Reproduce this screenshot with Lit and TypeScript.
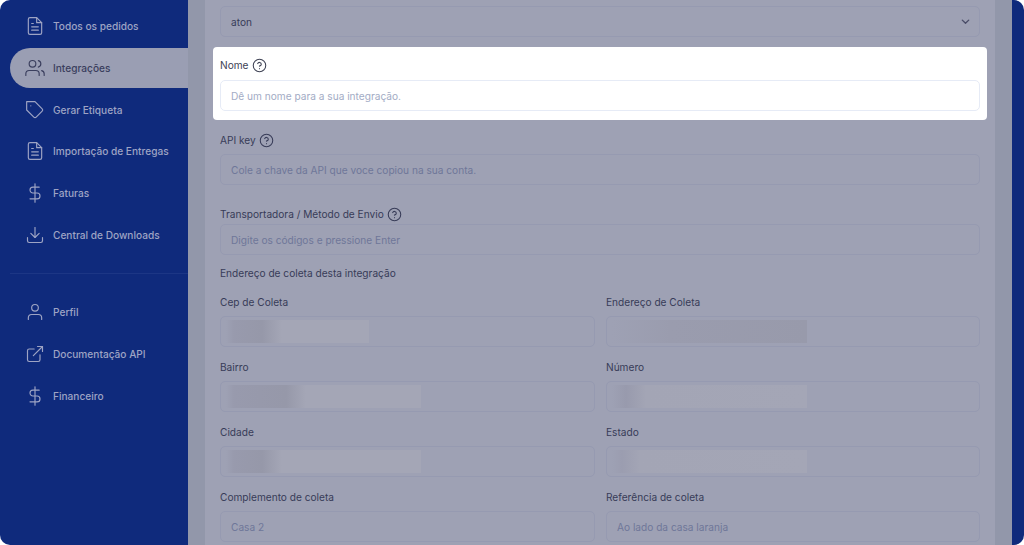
import { LitElement, html, css, svg } from "lit";
import { customElement } from "lit/decorators.js";

const icons: Record<string, unknown> = {
  file: svg`<path d="M14 2H6a2 2 0 0 0-2 2v16a2 2 0 0 0 2 2h12a2 2 0 0 0 2-2V8z"/><polyline points="14 2 14 8 20 8"/><line x1="16" y1="13" x2="8" y2="13"/><line x1="16" y1="17" x2="8" y2="17"/><polyline points="10 9 9 9 8 9"/>`,
  users: svg`<path d="M17 21v-2a4 4 0 0 0-4-4H5a4 4 0 0 0-4 4v2"/><circle cx="9" cy="7" r="4"/><path d="M23 21v-2a4 4 0 0 0-3-3.87"/><path d="M16 3.13a4 4 0 0 1 0 7.75"/>`,
  tag: svg`<path d="M20.59 13.41l-7.17 7.17a2 2 0 0 1-2.83 0L2 12V2h10l8.59 8.59a2 2 0 0 1 0 2.82z"/><line x1="7" y1="7" x2="7.01" y2="7"/>`,
  dollar: svg`<line x1="12" y1="1" x2="12" y2="23"/><path d="M17 5H9.5a3.5 3.5 0 0 0 0 7h5a3.5 3.5 0 0 1 0 7H6"/>`,
  download: svg`<path d="M21 15v4a2 2 0 0 1-2 2H5a2 2 0 0 1-2-2v-4"/><polyline points="7 10 12 15 17 10"/><line x1="12" y1="15" x2="12" y2="3"/>`,
  user: svg`<path d="M20 21v-2a4 4 0 0 0-4-4H8a4 4 0 0 0-4 4v2"/><circle cx="12" cy="7" r="4"/>`,
  external: svg`<path d="M18 13v6a2 2 0 0 1-2 2H5a2 2 0 0 1-2-2V8a2 2 0 0 1 2-2h6"/><polyline points="15 3 21 3 21 9"/><line x1="10" y1="14" x2="21" y2="3"/>`,
};

const navTop = [
  ["file", "Todos os pedidos"],
  ["users", "Integrações"],
  ["tag", "Gerar Etiqueta"],
  ["file", "Importação de Entregas"],
  ["dollar", "Faturas"],
  ["download", "Central de Downloads"],
];
const navBottom = [
  ["user", "Perfil"],
  ["external", "Documentação API"],
  ["dollar", "Financeiro"],
];

type Field = { label: string; value?: string; width?: number; dark?: number; strength?: string };
const fields: Field[] = [
  { label: "Cep de Coleta", width: 143, dark: 36, strength: "r-strong" },
  { label: "Endereço de Coleta", width: 195, dark: 100, strength: "r-all" },
  { label: "Bairro", width: 195, dark: 60, strength: "r-strong" },
  { label: "Número", width: 195, dark: 14, strength: "r-soft" },
  { label: "Cidade", width: 195, dark: 36, strength: "r-strong" },
  { label: "Estado", width: 195, dark: 10, strength: "r-faint" },
  { label: "Complemento de coleta", value: "Casa 2" },
  { label: "Referência de coleta", value: "Ao lado da casa laranja" },
];

@customElement("app-root")
export class AppRoot extends LitElement {
  static styles = css`
    :host {
      display: block;
      width: 1024px;
      height: 545px;
      background: #ffffff;
      overflow: hidden;
      font-family: Inter, "Liberation Sans", sans-serif;
      font-size: 10.15px;
    }
    .frame {
      display: flex;
      height: 545px;
      overflow: hidden;
      border-radius: 10px;
      background: #0f2a7c;
    }
    .side {
      width: 188px;
      flex: none;
      padding-top: 6px;
      box-sizing: border-box;
    }
    .nav {
      display: flex;
      flex-direction: column;
      gap: 1.8px;
    }
    .item {
      display: flex;
      align-items: center;
      gap: 8px;
      height: 40px;
      margin-left: 10px;
      padding-left: 15px;
      color: #9ea4c4;
      font-weight: 500;
    }
    .item.active {
      background: #9a9eb3;
      color: #3b3f5e;
      border-radius: 20px 0 0 20px;
    }
    .nav-icon {
      width: 20px;
      height: 20px;
      flex: none;
      fill: none;
      stroke: currentColor;
      stroke-width: 1.4;
      stroke-linecap: round;
      stroke-linejoin: round;
    }
    .divider {
      height: 1px;
      margin: 18px 0 18px 10px;
      background: #1c3685;
    }
    .main {
      flex: 1;
      min-width: 0;
      padding: 0 17px;
      background: #9297aa;
    }
    .panel {
      height: 545px;
      box-sizing: border-box;
      overflow: hidden;
      padding: 6px 15px 0;
      background: #9ea1b4;
    }
    .strip {
      width: 12px;
      flex: none;
    }
    .label {
      display: flex;
      align-items: center;
      gap: 3.5px;
      height: 16px;
      color: #383c58;
      line-height: 16px;
    }
    .input {
      box-sizing: border-box;
      display: flex;
      align-items: center;
      height: 31px;
      padding: 0 10px;
      border: 1px solid #969ab1;
      border-radius: 5px;
      color: #6f7799;
    }
    .select {
      justify-content: space-between;
      color: #383c58;
    }
    .chev {
      width: 11px;
      height: 11px;
      margin-right: -2px;
      fill: none;
      stroke: #4a4d68;
      stroke-width: 3;
      stroke-linecap: round;
      stroke-linejoin: round;
    }
    .help {
      width: 15px;
      height: 15px;
      flex: none;
      fill: none;
      stroke: #383c58;
      stroke-width: 1.7;
      stroke-linecap: round;
      stroke-linejoin: round;
    }
    .spot {
      margin: 10px -7px 0;
      padding: 10px 7px 9px;
      background: #ffffff;
      border-radius: 4px;
    }
    .spot .label {
      margin-bottom: 7px;
      color: #3e4254;
    }
    .spot .help {
      stroke: #3e4254;
    }
    .spot .input {
      border-color: #e6ebf6;
      color: #a3acc5;
    }
    .api {
      margin-top: 12px;
    }
    .api .label {
      margin-bottom: 6px;
    }
    .carrier {
      margin-top: 21px;
    }
    .carrier .label {
      margin-bottom: 2px;
    }
    .heading {
      margin-top: 10px;
    }
    .grid {
      display: grid;
      grid-template-columns: 375px 374px;
      column-gap: 11px;
      row-gap: 12px;
      margin-top: 13px;
    }
    .cell .label {
      margin-bottom: 6px;
    }
    .has-redact {
      padding: 0 5px;
    }
    .redact {
      height: 23px;
    }
    .r-strong {
      background: linear-gradient(90deg, #9ea1b4 0, #989aad 8px, #9698a9 var(--d), #a4a6b6 calc(var(--d) + 20px), #a4a6b6 100%);
    }
    .r-all {
      background: linear-gradient(90deg, #9ea1b4 0, #9a9cae 30%, #989aab 100%);
    }
    .r-soft {
      background: linear-gradient(90deg, #9ea1b4 0, #989aad var(--d), #a3a5b5 calc(var(--d) + 20px), #a4a6b6 100%);
    }
    .r-faint {
      background: linear-gradient(90deg, #9ea1b4 0, #9b9db0 var(--d), #a3a5b5 calc(var(--d) + 18px), #a4a6b6 100%);
    }
  `;

  private navItem(icon: string, text: string) {
    const active = text === "Integrações";
    return html`<div class="item ${active ? "active" : ""}">
      <svg class="nav-icon" viewBox="0 0 24 24">${icons[icon]}</svg><span>${text}</span>
    </div>`;
  }

  private help() {
    return html`<svg class="help" viewBox="0 0 24 24">
      <circle cx="12" cy="12" r="10"></circle>
      <path d="M9.1 9a3 3 0 0 1 5.8 1c0 2-3 3-3 3"></path>
      <line x1="12" y1="17" x2="12.01" y2="17"></line>
    </svg>`;
  }

  private cell(f: Field) {
    return html`<div class="cell">
      <div class="label">${f.label}</div>
      ${f.value
        ? html`<div class="input">${f.value}</div>`
        : html`<div class="input has-redact">
            <div
              class="redact ${f.strength}"
              style="width:${f.width}px;--d:${f.dark}px"
            ></div>
          </div>`}
    </div>`;
  }

  render() {
    return html`<div class="frame">
      <aside class="side">
        <nav class="nav">${navTop.map(([i, t]) => this.navItem(i, t))}</nav>
        <div class="divider"></div>
        <nav class="nav">${navBottom.map(([i, t]) => this.navItem(i, t))}</nav>
      </aside>
      <main class="main">
        <div class="panel">
          <div class="input select">
            <span>aton</span>
            <svg class="chev" viewBox="0 0 24 24"><polyline points="5 9 12 16 19 9"></polyline></svg>
          </div>
          <div class="spot">
            <div class="label">Nome ${this.help()}</div>
            <div class="input">Dê um nome para a sua integração.</div>
          </div>
          <div class="api">
            <div class="label">API key ${this.help()}</div>
            <div class="input">Cole a chave da API que voce copiou na sua conta.</div>
          </div>
          <div class="carrier">
            <div class="label">Transportadora / Método de Envio ${this.help()}</div>
            <div class="input">Digite os códigos e pressione Enter</div>
          </div>
          <div class="label heading">Endereço de coleta desta integração</div>
          <div class="grid">${fields.map((f) => this.cell(f))}</div>
        </div>
      </main>
      <div class="strip"></div>
    </div>`;
  }
}
